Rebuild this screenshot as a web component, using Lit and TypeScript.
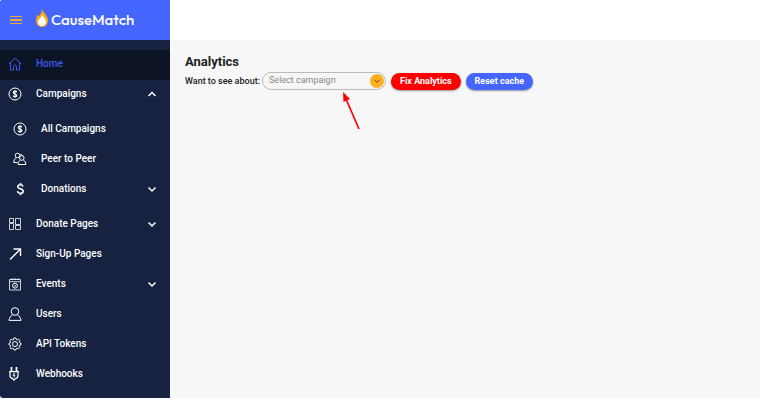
import { LitElement, html, svg, css, nothing, TemplateResult } from "lit";
import { customElement } from "lit/decorators.js";
import { classMap } from "lit/directives/class-map.js";

const icons: Record<string, TemplateResult> = {
  home: svg`<path d="M.7 7 7 1.300 13.300 7M2.500 5.800v7.200h3V9.500a1.500 1.500 0 0 1 3 0V13h3V5.800"/>`,
  coin: svg`<circle cx="7" cy="7" r="6"/><path stroke-width="1.200" d="M8.800 5.300C8.500 4.500 7.900 4.200 7 4.200c-1 0-1.700.5-1.700 1.300C5.300 7.300 8.800 6.500 8.800 8.500c0 .8-.8 1.300-1.800 1.300S5.300 9.400 5.100 8.600M7 3.200v7.600"/>`,
  people: svg`<circle cx="4.500" cy="3.500" r="2.300"/><circle cx="8.800" cy="6" r="2.300"/><path d="M4.300 10.500H.8c0-2.300.8-3.700 2.200-4.500M5 12.500c0-2.200 1-3.700 2.300-4.400M10.300 8.100c1.600.7 2.500 2.200 2.500 4.400H5M7 3c1-.8 2.300-.3 2.600.5"/>`,
  dollar: svg`<path stroke-width="1.500" d="M10 4.600C9.700 3.300 8.700 2.800 7.300 2.800c-1.500 0-2.500.7-2.500 1.900C4.800 7.500 10.200 6 10.200 9.200c0 1.300-1.200 2.100-2.800 2.100S4.700 10.600 4.400 9.200M7.500 1v2M7.500 11v2.200"/>`,
  grid: svg`<path stroke-opacity=".8" d="M1.500 1.500h4v4h-4zM1.500 6.500h4v6h-4zM7.500 1.500h5v6h-5zM7.500 8.500h5v4h-5z"/>`,
  arrow: svg`<path stroke-width="1.400" d="M2 12.500 12.300 2.200M5.500 2h7v7"/>`,
  calendar: svg`<path stroke-opacity=".8" d="M1.500 2.500h11v10.500h-11zM1.500 4.700h11M4 1v2M7 1v2M10 1v2"/><circle cx="7" cy="8.700" r="2.500"/><path d="m6 8.600.8.900L8.300 7.800"/>`,
  user: svg`<circle cx="7" cy="4.500" r="3.800"/><path d="M4.700 7.800C2.500 9 1.200 11 1 13.400h12c-.2-2.400-1.500-4.400-3.700-5.600"/>`,
  gear: svg`<circle cx="7" cy="7" r="2.500"/><path d="m5.900 1-.4 1.500-1 .4L3.200 2.200 1.900 3.500l.7 1.400-.4 1L1 6.300v1.600l1.300.4.4 1-.7 1.300 1.300 1.200 1.300-.6 1 .4.400 1.400h1.800l.4-1.400 1-.4 1.400.6 1.200-1.200-.7-1.400.4-1L13 7.800V6.200l-1.300-.4-.4-1 .7-1.300-1.300-1.300-1.300.7-1-.4L8 1z"/>`,
  plug: svg`<path stroke-width="1.800" d="M3.500 0v4M8.500 0v4"/><path stroke-width="1.200" d="M1 4.600h10M2 4.800V8.500c0 1.800 1.300 2.800 2.700 3.200L6 13.200l1.300-1.500C8.700 11.300 10 10.300 10 8.500V4.800"/><path d="M6.500 5.800 5 8.200h2L5.700 10.400"/>`,
  down: svg`<path stroke-width="1.500" d="m3.500 5.500 3.500 3.500 3.500-3.500"/>`,
  up: svg`<path stroke-width="1.500" d="M3.500 9 7 5.500 10.500 9"/>`,
};

const icon = (name: string) =>
  html`<svg class="icon" viewBox="0 0 14 14" aria-hidden="true">${icons[name]}</svg>`;

interface Item {
  label: string;
  icon: string;
  active?: boolean;
  chevron?: "up" | "down";
  children?: Item[];
}

const items: Item[] = [
  { label: "Home", icon: "home", active: true },
  {
    label: "Campaigns",
    icon: "coin",
    chevron: "up",
    children: [
      { label: "All Campaigns", icon: "coin" },
      { label: "Peer to Peer", icon: "people" },
      { label: "Donations", icon: "dollar", chevron: "down" },
    ],
  },
  { label: "Donate Pages", icon: "grid", chevron: "down" },
  { label: "Sign-Up Pages", icon: "arrow" },
  { label: "Events", icon: "calendar", chevron: "down" },
  { label: "Users", icon: "user" },
  { label: "API Tokens", icon: "gear" },
  { label: "Webhooks", icon: "plug" },
];

@customElement("app-sidebar")
export class AppSidebar extends LitElement {
  static styles = css`
    :host { display: block; background: #16223f; color: #fff; border-radius: 3px 0 0 3px; overflow: hidden; }
    .brand { display: flex; align-items: center; gap: 14px; height: 40px; padding: 0 10px; box-sizing: border-box; background: #4466ff; }
    .menu { display: flex; padding: 0; border: 0; background: none; }
    .bars { width: 12px; height: 10px; fill: #eda936; }
    .logo { display: flex; align-items: center; gap: 3px; color: #fff; text-decoration: none; font: 500 15px/20px Outfit, Lato, sans-serif; }
    .flame { width: 12px; height: 18px; margin-bottom: 4px; }
    .list { list-style: none; margin: 0; padding: 0; }
    .root { padding: 10px 0 8px; }
    .sub { padding: 5px 0; }
    .link { display: flex; align-items: center; gap: 14px; width: 100%; height: 30px; padding: 0 11px 2px 8px; box-sizing: border-box; border: 0; background: none; color: inherit; font: 500 10px/16px Roboto, sans-serif; text-align: left; text-decoration: none; }
    .sub .link { padding-left: 13px; }
    .active { background: #0c1425; color: #3c57e8; }
    .label { flex: 1; }
    .icon { flex: none; width: 14px; height: 14px; fill: none; stroke: currentColor; }
  `;

  private row(item: Item): TemplateResult {
    const body = html`${icon(item.icon)}<span class="label">${item.label}</span>${item.chevron ? icon(item.chevron) : nothing}`;
    return html`<li>
      ${item.chevron
        ? html`<button class="link" type="button" aria-expanded=${item.chevron === "up"}>${body}</button>`
        : html`<a class=${classMap({ link: true, active: !!item.active })} href="#">${body}</a>`}
      ${item.children ? html`<ul class="list sub">${item.children.map((c) => this.row(c))}</ul>` : nothing}
    </li>`;
  }

  render() {
    return html`
      <div class="brand">
        <button class="menu" type="button" aria-label="Menu">
          <svg class="bars" viewBox="0 0 12 10"><path d="M0 1h12v1H0zM0 4h12v2H0zM0 8h12v1H0z" /></svg>
        </button>
        <a class="logo" href="#">
          <svg class="flame" viewBox="0 0 12 18" aria-hidden="true">
            <path fill="#ffa912" d="M6 0c.4 3 6 6 6 11.500C12 15.500 9.500 18 6 18s-6-2.500-6-6.500C0 9 1 7 2 5.500l1.300 1.700C4.800 5 5.800 2.500 6 0z" />
            <path fill="#fff" d="M6.300 5.500c.5 2.500 3.700 4 3.700 7.200 0 2.500-1.500 4.300-4 4.300s-4-1.800-4-4.300c0-3 3.800-4 4.300-7.200z" />
          </svg>
          <span>CauseMatch</span>
        </a>
      </div>
      <nav><ul class="list root">${items.map((i) => this.row(i))}</ul></nav>
    `;
  }
}

@customElement("app-root")
export class AppRoot extends LitElement {
  static styles = css`
    :host { display: block; background: #fff; font-family: Roboto, sans-serif; }
    .page { display: grid; grid-template-columns: 170px 1fr; padding-right: 23px; }
    .content { margin-top: 40px; padding: 13px 15px; background: #f7f7f7; color: #222; }
    .title { margin: 0 0 1px; font-size: 13px; line-height: 18px; font-weight: 700; }
    .bar { display: flex; align-items: center; gap: 5px; }
    .field { display: flex; align-items: center; gap: 2px; }
    .name { font-size: 9px; line-height: 12px; font-weight: 500; }
    .picker { position: relative; display: flex; width: 124px; }
    .select { appearance: none; width: 100%; height: 18px; padding: 0 18px 2px 6px; box-sizing: border-box; border: 1px solid #bbb; border-radius: 9px; background: none; color: #888; font: 400 9px/14px Roboto, sans-serif; }
    .knob { position: absolute; top: 2px; right: 2px; width: 14px; height: 14px; border-radius: 50%; background: #ffb020; fill: none; stroke: #5c3f10; pointer-events: none; }
    .button { height: 17px; padding: 0 9px; border: 0; border-radius: 9px; color: #fff; font: 700 9px/16px Roboto, sans-serif; box-shadow: 0 1px 2px #0006; }
    .fix { background: #f00; }
    .reset { background: #4466ff; }
    .pointer { position: absolute; top: 20px; left: 80px; width: 20px; height: 38px; fill: #f00; stroke: #f00; pointer-events: none; }
  `;

  render() {
    return html`
      <div class="page">
        <app-sidebar></app-sidebar>
        <main class="content">
          <h1 class="title">Analytics</h1>
          <div class="bar">
            <div class="field">
              <label class="name" for="campaign">Want to see about:</label>
              <div class="picker">
                <select class="select" id="campaign"><option>Select campaign</option></select>
                <svg class="knob" viewBox="0 0 14 14" aria-hidden="true"><path d="m4.500 6 2.500 2.300L9.500 6" /></svg>
                <svg class="pointer" viewBox="0 0 20 38" aria-hidden="true">
                  <path stroke="none" d="M1 0 8 7 1.500 10z" /><path stroke-width="1.700" d="M4 7 17 37" />
                </svg>
              </div>
            </div>
            <button class="button fix" type="button">Fix Analytics</button>
            <button class="button reset" type="button">Reset cache</button>
          </div>
        </main>
      </div>
    `;
  }
}
